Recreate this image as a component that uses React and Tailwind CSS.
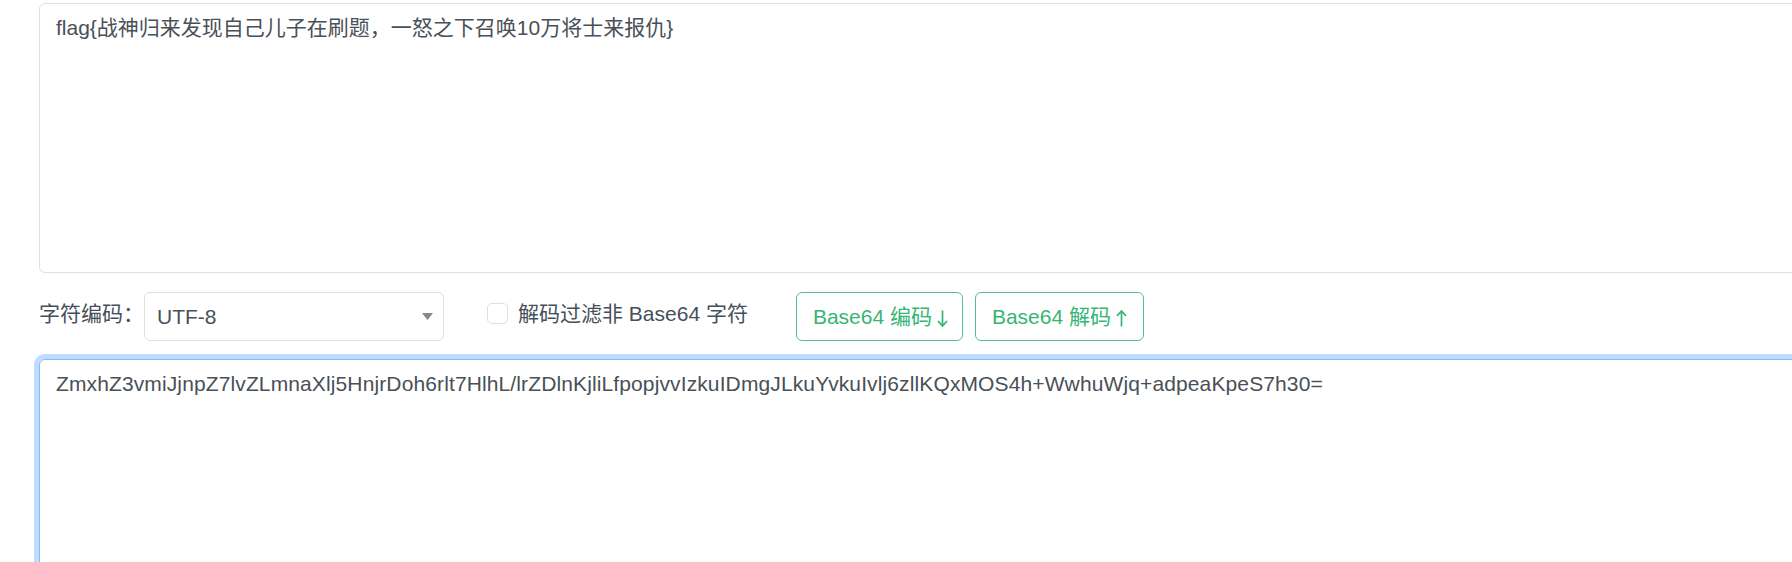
export default function App() {
  const font = { fontFamily: '"Liberation Sans", "Noto Sans CJK SC", sans-serif' };
  const flag = "flag{战神归来发现自己儿子在刷题，一怒之下召唤10万将士来报仇}";
  const b64 = "ZmxhZ3vmiJjnpZ7lvZLmnaXlj5HnjrDoh6rlt7HlhL/lrZDlnKjliLfpopjvvIzkuIDmgJLkuYvkuIvlj6zllKQxMOS4h+WwhuWjq+adpeaKpeS7h30=";
  const Arrow = ({ up }) => (
    <svg width="11" height="17" viewBox="0 0 11 17" className={"ml-[5px] mt-[3px] " + (up ? "rotate-180" : "")}>
      <path d="M5.5 0.5 L5.5 16 M1 11.2 L5.5 16 L10 11.2" stroke="#36b574" strokeWidth="1.7" fill="none" />
    </svg>
  );
  return (
    <div className="w-full h-screen overflow-hidden bg-white" style={font}>
      <div className="pl-[39px] pt-[3px] w-[1900px]">
        <div className="h-[270px] border border-[#dcdfe6] rounded-[6px] px-[16px] pt-[8px] text-[21px] leading-[1.5] text-[#495057]">
          {flag}
        </div>
        <div className="mt-[19px] flex items-center h-[49px]">
          <span className="text-[21px] text-[#454f5a] mb-[5px] whitespace-nowrap">字符编码：</span>
          <div className="w-[300px] h-[49px] border border-[#dcdfe6] rounded-[6px] flex items-center justify-between pl-[12px] pr-[10px] text-[21px] text-[#495057]">
            <span>UTF-8</span>
            <svg width="11" height="7" viewBox="0 0 11 7">
              <path d="M0 0 L11 0 L5.5 7 Z" fill="#888888" />
            </svg>
          </div>
          <label className="ml-[43px] flex items-center gap-[10px] mb-[6px] text-[21px] text-[#454f5a] whitespace-nowrap">
            <span className="w-[21px] h-[21px] border border-[#dcdfe6] rounded-[5px] bg-white" />
            <span>解码过滤非 Base64 字符</span>
          </label>
          <button className="ml-[48px] w-[167px] h-[49px] pl-[16px] border border-[#52c08c] rounded-[6px] text-[21px] text-[#36b574] bg-white whitespace-nowrap flex items-center">
            <span>Base64 编码</span>
            <Arrow />
          </button>
          <button className="ml-[12px] w-[169px] h-[49px] pl-[16px] border border-[#52c08c] rounded-[6px] text-[21px] text-[#36b574] bg-white whitespace-nowrap flex items-center">
            <span>Base64 解码</span>
            <Arrow up />
          </button>
        </div>
        <div className="mt-[18px] h-[400px] border border-[#80bdff] rounded-[6px] shadow-[0_0_0_5px_rgba(0,123,255,0.25)] px-[16px] pt-[8px] text-[21px] leading-[1.5] tracking-[0.12px] text-[#495057]">
          {b64}
        </div>
      </div>
    </div>
  );
}
